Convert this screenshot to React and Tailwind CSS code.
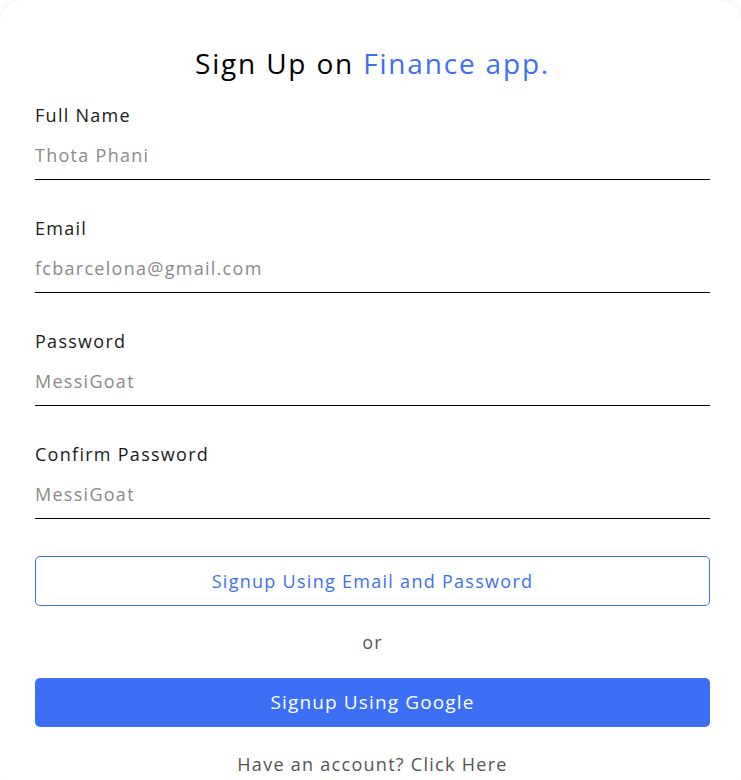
import React, { useState } from "react";

const fields = [
  { id: "name", label: "Full Name", placeholder: "Thota Phani" },
  { id: "email", label: "Email", placeholder: "fcbarcelona@gmail.com" },
  { id: "password", label: "Password", placeholder: "MessiGoat" },
  { id: "confirm", label: "Confirm Password", placeholder: "MessiGoat" },
];

const SignUp = () => {
  const [values, setValues] = useState({});

  return (
    <div className="min-h-screen bg-white font-['Open_Sans',sans-serif] tracking-[0.08em]">
      <div className="w-full rounded-[22px] bg-white shadow-[0_0_8px_rgba(0,0,0,0.08)] pl-[35px] pr-[31px] pt-[45px] pb-[20px]">
        <h2 className="text-center text-[28px] leading-[36px] tracking-[0.065em] text-black">
          Sign Up on <span className="text-[#3d6ff5]">Finance app.</span>
        </h2>

        <form className="mt-[21px] flex flex-col gap-[35px]">
          {fields.map((f) => (
            <div key={f.id} className="flex flex-col gap-[2px]">
              <label htmlFor={f.id} className="text-[18px] leading-[27px] text-[#1a1a1a]">
                {f.label}
              </label>
              <input
                id={f.id}
                type="text"
                value={values[f.id] || ""}
                onChange={(e) => setValues({ ...values, [f.id]: e.target.value })}
                placeholder={f.placeholder}
                className="h-[49px] border-b border-black text-[18px] text-[#333] placeholder:text-[#8a8a8a] outline-none"
              />
            </div>
          ))}
        </form>

        <button
          type="button"
          className="mt-[37px] w-full h-[50px] rounded-[5px] border border-[#3f6fd8] text-[#3d6ff5] text-[18px]"
        >
          Signup Using Email and Password
        </button>

        <p className="mt-[23px] text-center text-[18px] leading-[27px] text-[#555]">or</p>

        <button
          type="button"
          className="mt-[22px] w-full h-[49px] rounded-[5px] bg-[#3d6ff5] text-white text-[19px] tracking-[0.06em]"
        >
          Signup Using Google
        </button>

        <p className="mt-[24px] text-center text-[18px] leading-[27px] text-[#555]">
          Have an account? Click Here
        </p>
      </div>
    </div>
  );
};

export default function App() {
  return <SignUp />;
}
